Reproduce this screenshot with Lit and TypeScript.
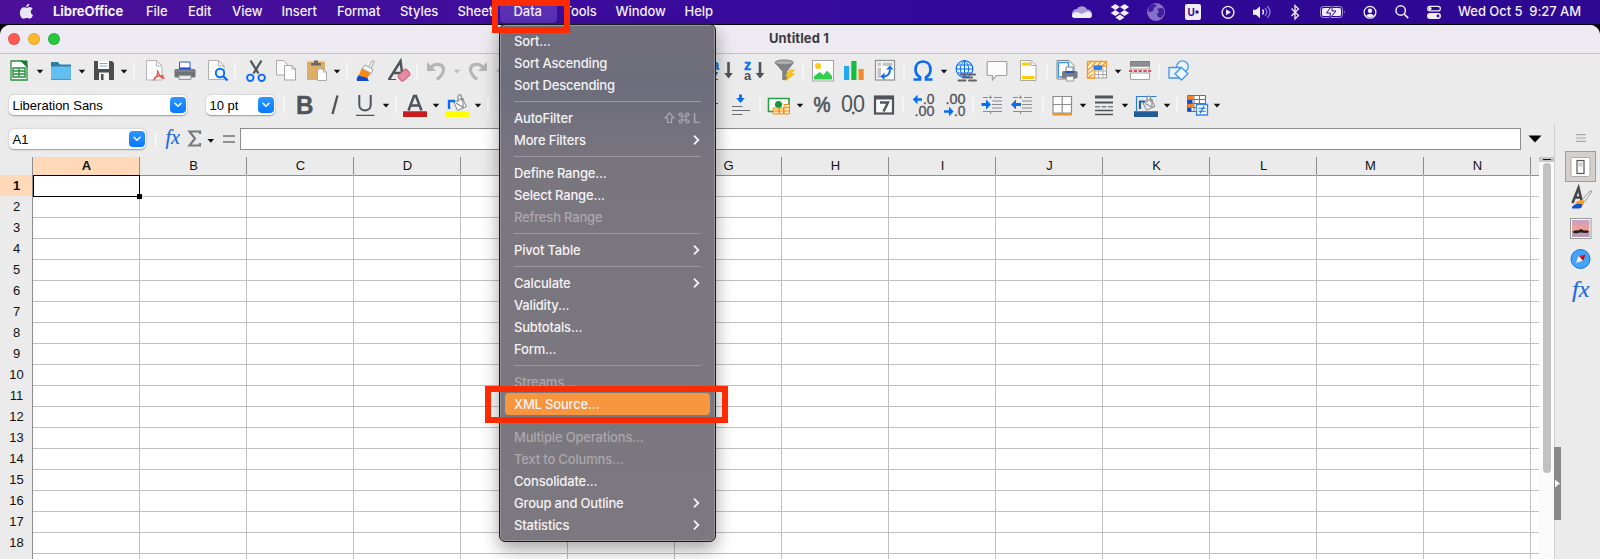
import { LitElement, html, svg, css, SVGTemplateResult } from 'lit';
import { customElement } from 'lit/decorators.js';
import { classMap } from 'lit/directives/class-map.js';

const G = '#50545a';
const B = '#0a6cf0';

// Toolbar glyphs, each drawn on a 24x24 grid.
const icons: Record<string, SVGTemplateResult> = {
  arrow: svg`<path d="M8.7 10.7h6.6L12 14.5z" fill="#111"/>`,
  arrowOff: svg`<path d="M8.7 10.7h6.6L12 14.5z" fill="#bbb"/>`,
  sep: svg`<path d="M12 4v16" stroke="#fafafa" stroke-width="1.4"/>`,
  newSheet: svg`<path d="M4 2h11l5 5v14H4z" fill="#fff" stroke="#2a8f3e" stroke-width="1.3"/><path d="M13 1.5h7.5V9z" fill="#157a2b"/><path d="M6 9h12v9H6zM6 12h12M6 15h12M12 9v9" fill="#fff" stroke="#2a8f3e" stroke-width="1.4"/>`,
  folder: svg`<path d="M2 3h7l2 2.5h11V12H2z" fill="#2e7fa8"/><path d="M2 7.5h20V20a1 1 0 0 1-1 1H3a1 1 0 0 1-1-1z" fill="#62bdf0"/><path d="M2 20.5h20" stroke="#3b9bd4"/>`,
  save: svg`<path d="M2 2h18l2 2v17H2z" fill="#4d4d50"/><path d="M6 2h11v8H6z" fill="#fff"/><path d="M7.500 4.500h8M7.500 7h8" stroke="#76a9dc"/><path d="M7 13.500h10V21H7z" fill="#f4f4f4"/><path d="M9 15h2.500v6H9z" fill="#4d4d50"/>`,
  pdf: svg`<path d="M3.500 1.500h10l5.500 5.500v14H3.500z" fill="#fbfbfb" stroke="#b6b6b6"/><path d="M13.500 1.500V7H19" fill="none" stroke="#b6b6b6"/><path d="M14.500 11c1.500 3-1.500 8-4.500 10.500M14.500 12c1 4 3 6.500 7 7.500M11 19c2-1.500 6-2.500 10-2" fill="none" stroke="#f0514b" stroke-width="1.400"/>`,
  print: svg`<path d="M6.500 3h10.500v8H6.500z" fill="#fff" stroke="#2a5fd0"/><path d="M6 9.500h11.500" stroke="#1546c8" stroke-width="2"/><rect x="1.500" y="10" width="21" height="8.500" rx="1.500" fill="#6f7276"/><path d="M3 12h18" stroke="#8d9094"/><path d="M6 16.500h12v4H6z" fill="#e8e8e8" stroke="#999"/>`,
  preview: svg`<path d="M2.500 1.500h10l5.500 5.500v13.500H2.500z" fill="#fafafa" stroke="#b0b0b0"/><path d="M12.500 1.500V7H18" fill="none" stroke="#b0b0b0"/><circle cx="14" cy="14" r="4.200" fill="#e8f4ff" stroke="${B}" stroke-width="1.900"/><path d="M17 17l4.500 4.500" stroke="${B}" stroke-width="2.300"/>`,
  cut: svg`<path d="M6.500 1.500l8 13M17.500 1.500l-8 13" stroke="#55585c" stroke-width="2.300"/><circle cx="6.300" cy="18.800" r="3.200" fill="none" stroke="${B}" stroke-width="1.900"/><circle cx="17.700" cy="18.800" r="3.200" fill="none" stroke="${B}" stroke-width="1.900"/>`,
  copy: svg`<path d="M2.500 1.500h7l3.500 3.500v11H2.500z" fill="#fafafa" stroke="#aaa"/><path d="M10.500 6.500H18l3.500 3.500v11h-11z" fill="#fff" stroke="#a3a3a3"/><path d="M18 6.500V10h3.500" fill="none" stroke="#a3a3a3"/>`,
  paste: svg`<rect x="2" y="2.500" width="18" height="18.500" rx="1" fill="#dcae67"/><path d="M6 6.500V4h3V1.500h4V4h3v2.500z" fill="#68696b"/><path d="M12.500 10h6l3 3v8.500h-9z" fill="#fff" stroke="#a9a9a9"/><path d="M18.500 10v3h3" fill="none" stroke="#a9a9a9"/>`,
  brush: svg`<path d="M15.500 8.500l4-7 1.800 1-3.300 7" fill="#fff" stroke="#a0a0a0"/><path d="M12 6l8 4.500-1.700 4-9-5z" fill="#f4f4f4" stroke="#a5a5a5"/><path d="M8.500 9.500l9 5c-1 2-2.500 3-3.500 5.500L5 17c1.800-2.500 2.500-5 3.500-7.500z" fill="#f78a0c"/><path d="M5.500 16.500l9 2.500c.5 1.500 1 2.200 1.500 3H4c-.8-1.500 0-4 1.500-5.500z" fill="#1549c8"/>`,
  clear: svg`<path d="M2 20.500L13.500 2l1.700 12.500M6.500 14H14" fill="none" stroke="${G}" stroke-width="2.500"/><path d="M1 20.500h8" stroke="${G}"/><rect x="11.500" y="12.500" width="11.500" height="7.500" rx="1.800" fill="#e98ca3" stroke="#c75c78" transform="rotate(-42 17 16.500)"/>`,
  undo: svg`<path d="M6 9.500c4-6 13.500-5.500 13.500 1.500 0 4-3.500 7-6.500 9.500" fill="none" stroke="#b5b5b5" stroke-width="3.200"/><path d="M3 3v9h9z" fill="#b5b5b5"/>`,
  redo: svg`<path d="M18 9.500C14 3.500 4.500 4 4.500 11c0 4 3.500 7 6.500 9.500" fill="none" stroke="#b5b5b5" stroke-width="3.200"/><path d="M21 3v9h-9z" fill="#b5b5b5"/>`,
  sortAsc: svg`<text x="1.500" y="10.500" font-size="14" font-weight="700" fill="${B}">a</text><text x="1.500" y="21" font-size="14" fill="${G}">z</text><path d="M18.500 3v13" stroke="${G}" stroke-width="2.600"/><path d="M14.200 14h8.600l-4.300 5.500z" fill="${G}"/>`,
  sortDesc: svg`<text x="2" y="10.500" font-size="14.500" font-weight="700" fill="${B}" stroke="${B}" stroke-width=".3">z</text><text x="2" y="21" font-size="13" font-weight="700" fill="${G}">a</text><path d="M18 3v13" stroke="${G}" stroke-width="2.600"/><path d="M13.700 14h8.600L18 19.500z" fill="${G}"/>`,
  filter: svg`<path d="M2 4l7.200 8.500V21h5v-8.500L20.500 4z" fill="#808285"/><ellipse cx="11.200" cy="3.500" rx="9.200" ry="2.500" fill="#a8aaac" stroke="#77797c"/><path d="M17 11l-5 6h3.500L12 22l9.500-7h-4l4-4z" fill="#ffc31c" stroke="#e9a500" stroke-width=".6"/>`,
  image: svg`<rect x="1.500" y="1.500" width="21" height="20.500" fill="#fff" stroke="#a3a3a3"/><circle cx="7" cy="7" r="3" fill="#ffcb12"/><path d="M3 20.500v-3L8.500 13l4 3 3.500-4.500 5 5.500v3.500z" fill="#2fce4b"/>`,
  chart: svg`<path d="M2 7h5.200v14H2z" fill="#23a7ee"/><path d="M9.300 2h5.200v19H9.300z" fill="#14bd3d"/><path d="M16.500 10h5.200v11h-5.200z" fill="#f58a2b"/>`,
  pivot: svg`<rect x="2.500" y="1.500" width="19" height="19.500" fill="#fff" stroke="#909294" stroke-width="1.300"/><path d="M4.500 3.500H8V7H4.500zM9.500 3.500h10V7h-10zM4.500 8.500H8v10.500H4.500z" fill="#c3c5c8"/><path d="M10 17.500c4 0 7-2.500 7-7" fill="none" stroke="${B}" stroke-width="2"/><path d="M13 10.500h7.500L17 6.500zM11.500 13.500v7.500L7.500 17.500z" fill="${B}"/>`,
  omega: svg`<path d="M2.500 20.500H9v-2.300C6 16.500 4.500 14 4.500 10.500c0-5 3-8 7.500-8s7.500 3 7.500 8c0 3.500-1.500 6-4.500 7.700v2.300h6.500" fill="none" stroke="${B}" stroke-width="2.700"/>`,
  globe: svg`<circle cx="10.500" cy="10" r="8.300" fill="#e9f4ff" stroke="${B}" stroke-width="1.200"/><path d="M2.300 10h16.500M3.500 6h14M3.500 14h14M10.500 1.700v16.500M10.500 1.700c-5.500 4-5.500 12.500 0 16.500M10.500 1.700c5.500 4 5.500 12.500 0 16.500" fill="none" stroke="${B}"/><path d="M7 15.500h6M15 15.500h6M9 18.500h9M4.500 21.500h7M15 21.500h7" stroke="#606468" stroke-width="2" stroke-linecap="round"/>`,
  comment: svg`<path d="M3 2.500h18a.8.800 0 0 1 .8.800v12.400a.8.800 0 0 1-.8.800H11.500L7.500 21v-4.500H3a.8.800 0 0 1-.8-.8V3.300A.8.800 0 0 1 3 2.500z" fill="#fcfcfc" stroke="#a0a0a0" stroke-width="1.200"/>`,
  headFoot: svg`<path d="M4.500 1.500h10.500l5 5V21.500H4.500z" fill="#fff" stroke="#a8a8a8"/><path d="M15 1.500V6.500h5" fill="none" stroke="#a8a8a8"/><path d="M6 3.500h8v3H6zM6 17h12.500v3H6z" fill="#ffca10"/>`,
  printArea: svg`<path d="M2 1.500h12l5 5V20H2z" fill="#fff" stroke="#7f8285"/><path d="M3.500 3.500h10v14.500h-10z" fill="#fff" stroke="#3994ee" stroke-width="1.300"/><path d="M11 8h7v6h-7z" fill="#f5f5f5" stroke="#888"/><rect x="7" y="12" width="15.500" height="7.500" rx="1.500" fill="#777a7e"/><path d="M10.500 13h8.500" stroke="#1b55c8" stroke-width="2"/><path d="M11.500 17.500h7V22h-7z" fill="#fff" stroke="#999"/>`,
  freeze: svg`<path d="M2.500 2.500h19V19h-19z" fill="#fff" stroke="#999"/><path d="M2.500 2.500h19V7h-12v12h-7z" fill="#fff3df" stroke="#f79a22" stroke-width="1.400"/><path d="M3 6l3-3M7 7l4-4M12 7l4-4M17 7l4-4M3 11l5-4M3 15l5-4M3 19l5-4" stroke="#f79a22" stroke-width="1.200"/><path d="M9 12h12M9 15.500h12M13.500 7v12M18 7v12" stroke="#aaa"/><path d="M8.500 6.500h8.500v4.500H8.500z" fill="#2683ef"/>`,
  split: svg`<path d="M2.500 2.500h19v4.800h-19z" fill="#8d8f92" stroke="#808080"/><path d="M2.500 7.500h19V10h-19zM2.500 14h19v6.500h-19z" fill="#fff" stroke="#a5a5a5"/><path d="M1 12h22" stroke="#e0142e" stroke-width="1.600" stroke-dasharray="3.200 1.600"/>`,
  shapes: svg`<circle cx="15.500" cy="7.500" r="5.700" fill="#eef6fd" stroke="#4297f0" stroke-width="1.300"/><path d="M2 8.500h11v10.500H2z" fill="#e6f2fd" stroke="#4297f0" stroke-width="1.300"/><path d="M14.500 8.500l6.500 6.200-6.500 6.300L8 14.700z" fill="#f0f7fe" stroke="#4297f0" stroke-width="1.300"/>`,
  bold: svg`<text x="3" y="21" font-size="26" font-weight="700" textLength="17.500" lengthAdjust="spacingAndGlyphs" fill="${G}" stroke="${G}" stroke-width=".4">B</text>`,
  italic: svg`<path d="M14.500 2.500L9.500 21" stroke="${G}" stroke-width="2.400"/>`,
  underline: svg`<path d="M6.300 2v10c0 7.200 11.400 7.200 11.400 0V2" fill="none" stroke="${G}" stroke-width="2"/><path d="M3 22.300h18.500" stroke="${G}" stroke-width="1.200"/>`,
  fontColor: svg`<path d="M5.500 17.500L11 3h2l5.500 14.500M7.500 12.500h9" fill="none" stroke="${G}" stroke-width="2.500"/><path d="M0 18.300h24V24H0z" fill="#c91c1c"/>`,
  highlight: svg`<path d="M9 9.500l8-4.500 4.500 8.500-9 4z" fill="#f5f6f7" stroke="#85888c"/><path d="M13 9V3.500c0-2.500 3.500-2.500 3.500 0V8M18 5v9M11 10l8 5" fill="none" stroke="#8d9094" stroke-width="1.200"/><path d="M4 16V8h6" fill="none" stroke="${B}" stroke-width="2.400"/><path d="M0 18.300h24V24H0z" fill="#ff0"/>`,
  vcenter: svg`<path d="M2 10.500h19" stroke="${G}" stroke-width="1.200"/>`,
  vbottom: svg`<path d="M11.500 1.500v4" stroke="${B}" stroke-width="2.800"/><path d="M7.200 5h8.600L11.500 10z" fill="${B}"/><path d="M3 13.500h10.500M3 17.500h18M3 21.500h10.500" stroke="#696c70" stroke-width="1.200"/>`,
  currency: svg`<path d="M1.500 5.500h20.500v13H1.500z" fill="#fff" stroke="#27a143" stroke-width="1.600"/><circle cx="11.500" cy="11.500" r="3.500" fill="#179537"/><path d="M6 15h6v6H6zM12.500 15h4v6h-4zM17 11.500h5.500V21H17z" fill="#ffe7b7" stroke="#f08d18"/><path d="M6 18h6M12 18h4.500M17 14.500h5.500M17 18h5.500" stroke="#f08d18"/>`,
  percent: svg`<text x="3.500" y="19" font-size="22" textLength="17" lengthAdjust="spacingAndGlyphs" fill="${G}" stroke="${G}" stroke-width=".7">%</text>`,
  number: svg`<text x="0" y="19" font-size="23" textLength="24" lengthAdjust="spacingAndGlyphs" fill="${G}">00</text><path d="M11.200 18.800h2.200V21.200h-2.200z" fill="${G}"/>`,
  date: svg`<rect x="3" y="3.500" width="18" height="17" fill="#fafafa" stroke="${G}" stroke-width="2.200"/><path d="M3 5h18" stroke="${G}" stroke-width="3"/><path d="M8 9.500h8L11.500 18.500" fill="none" stroke="${G}" stroke-width="2.400"/>`,
  decAdd: svg`<path d="M4 6.500h6" stroke="${B}" stroke-width="2.700"/><path d="M5.500 1.800v9.400L.8 6.500z" fill="${B}"/><text x="11" y="11" font-size="14.500" textLength="11.500" lengthAdjust="spacingAndGlyphs" fill="${G}" stroke="${G}" stroke-width=".3">.0</text><text x="2.500" y="23" font-size="14.500" textLength="20" lengthAdjust="spacingAndGlyphs" fill="${G}" stroke="${G}" stroke-width=".3">.00</text>`,
  decDel: svg`<text x="2.500" y="11" font-size="14.500" textLength="20" lengthAdjust="spacingAndGlyphs" fill="${G}" stroke="${G}" stroke-width=".3">.00</text><path d="M1 18.500h6" stroke="${B}" stroke-width="2.700"/><path d="M6 13.800v9.400l4.700-4.700z" fill="${B}"/><text x="11" y="23" font-size="14.500" textLength="11.500" lengthAdjust="spacingAndGlyphs" fill="${G}" stroke="${G}" stroke-width=".3">.0</text>`,
  indent: svg`<path d="M9 4.500h3M14 4.500h8M12 8h10M12 11.500h10M12 15h10M3 18.500h19M3 4.500h5M10.500 2.500v3M10.500 18v3" stroke="#898c90" stroke-width="1.200"/><path d="M1.500 11.500h6" stroke="${B}" stroke-width="2.800"/><path d="M6 6.500v10l5-5z" fill="${B}"/>`,
  outdent: svg`<path d="M9 4.500h3M14 4.500h8M12 8h10M12 11.500h10M12 15h10M3 18.500h19M3 4.500h5M10.500 2.500v3M10.500 18v3" stroke="#898c90" stroke-width="1.200"/><path d="M5 11.500h6" stroke="${B}" stroke-width="2.800"/><path d="M6 6.500v10l-5-5z" fill="${B}"/>`,
  borders: svg`<path d="M3 3.500h18.500V20H3zM12.200 3.500v16M3 11.500h18.500" fill="#fff" stroke="#8b8d90" stroke-width="1.200"/><path d="M2.500 21.300h19.500" stroke="#f7931e" stroke-width="2.400"/>`,
  lineStyle: svg`<path d="M3 4h18" stroke="${G}" stroke-width="3"/><path d="M3 9.500h18" stroke="${G}" stroke-width="2"/><path d="M3 13.800h18" stroke="${G}" stroke-dasharray="5 1.500"/><path d="M3 17.500h18M3 21.500h18" stroke="${G}" stroke-width="1.600"/>`,
  lineColor: svg`<path d="M2.500 18V3.500h20" fill="none" stroke="#2f7fd0" stroke-width="1.200"/><path d="M9 10l8-4.500 4 8-8.500 3.500z" fill="#eee" stroke="#85888c"/><path d="M13 9.500V5c0-2.500 3.500-2.500 3.500 0v4M18 6v8M11 10.500l8 4" fill="none" stroke="#8d9094" stroke-width="1.200"/><path d="M6 16V8.500h5" fill="none" stroke="#2a6099" stroke-width="2.200"/><path d="M0 18.300h24V24H0z" fill="#235c99"/>`,
  conditional: svg`<path d="M2.500 2.500h18v16h-18zM9 2.500v16M14.500 2.500v16M2.500 6.500h18M2.500 10.500h18M2.500 14.500h18" fill="#fff" stroke="#6e7073"/><path d="M2.500 3H8.500v3.500h-6zM2.500 11H8.500v3.500h-6z" fill="#f58220"/><path d="M2.500 7H7.500v3.500h-5zM2.500 15H6.500v3.500h-4z" fill="#1648c8"/><path d="M11.500 11.500h11V22h-11z" fill="#fff" stroke="#3585ea" stroke-width="1.300"/><path d="M13.500 15.200h7M13.500 18.200h7M19 13l-4 7.500" stroke="${B}" stroke-width="1.100"/>`,
};

type Tool = [name: string, centre: number];
const row1: Tool[] = [
  ['newSheet', 19], ['arrow', 40], ['folder', 61], ['arrow', 82], ['save', 104], ['arrow', 124], ['sep', 134],
  ['pdf', 154.5], ['print', 185], ['preview', 217.5], ['sep', 234.5], ['cut', 255.5], ['copy', 286], ['paste', 317], ['arrow', 337], ['sep', 346.5],
  ['brush', 365], ['clear', 399], ['sep', 416.5], ['undo', 436], ['arrowOff', 457], ['redo', 478], ['arrowOff', 498.5],
  ['sortAsc', 722], ['sortDesc', 753.5], ['filter', 785], ['sep', 802.5], ['image', 823], ['chart', 854], ['pivot', 885], ['sep', 903.5],
  ['omega', 923], ['arrow', 944], ['globe', 965.5], ['comment', 997], ['headFoot', 1028], ['sep', 1046.5],
  ['printArea', 1067], ['freeze', 1097], ['arrow', 1118], ['split', 1140], ['sep', 1158.5], ['shapes', 1179],
];
const row2: Tool[] = [
  ['sep', 283.5], ['bold', 304.5], ['italic', 334.5], ['underline', 365], ['arrow', 385.500], ['sep', 395.5], ['fontColor', 415], ['arrow', 435.500],
  ['highlight', 457], ['arrow', 477.5], ['sep', 487.5], ['vcenter', 709], ['vbottom', 741], ['sep', 759.5], ['currency', 779], ['arrow', 799.5],
  ['percent', 822], ['number', 853], ['date', 884], ['sep', 902.5], ['decAdd', 924], ['decDel', 955], ['sep', 972.5],
  ['indent', 991.5], ['outdent', 1022], ['sep', 1042.5], ['borders', 1061.5], ['arrow', 1082.5], ['lineStyle', 1104], ['arrow', 1124.5],
  ['lineColor', 1146], ['arrow', 1166.5], ['sep', 1176.5], ['conditional', 1196.5], ['arrow', 1216.5],
];

const STATUS: [SVGTemplateResult, number][] = [
  [svg`<path d="M2 14c0-3 2.500-5 5-5 1.500-3.500 8-4 10 .5 3 0 5 2 5 4.500z" fill="#a99bd6"/><path d="M4.500 18C1 18 1 13 5 12.500c2-1.500 4 0 6.500 1.500l6-2.500c2 0 4.500 1.500 4.500 3.700 0 2-1.500 2.800-3 2.800z" fill="#f0eef8"/>`, 1082],
  [svg`<path d="M7.300 4l4.600 3-4.600 3-4.600-3zM16.500 4l4.600 3-4.600 3-4.600-3zM7.300 10l4.600 3-4.600 3-4.600-3zM16.500 10l4.600 3-4.600 3-4.600-3zM11.900 14.500l4.600 3-4.600 3-4.600-3z" fill="#f0eef8"/>`, 1120],
  [svg`<circle cx="12" cy="12" r="9" fill="#8470c6"/><path d="M5 6l4-2 4 1-3 3-1 3-3 1-2-1zM13 9l4-1 3 1v5l-3 4-3-1-1-3 2-2z" fill="#370d9a" opacity=".85"/>`, 1156],
  [svg`<rect x="4" y="4" width="16" height="16" rx="2" fill="#f0eef8"/><text x="6.500" y="15.700" font-size="10" font-weight="700" fill="#330b96">U</text><circle cx="16" cy="12" r="1.700" fill="#330b96"/>`, 1193],
  [svg`<circle cx="12" cy="12.300" r="5.900" fill="none" stroke="#f0eef8" stroke-width="1.400"/><path d="M10 9.300v6l5-3z" fill="#f0eef8"/>`, 1227.5],
  [svg`<path d="M3 9.700h3l4-3.500v12l-4-3.500H3z" fill="#f0eef8"/><path d="M12.500 9.500q2 2.500 0 5" fill="none" stroke="#f0eef8" stroke-width="1.300"/><path d="M15 7.800q3.500 4.200 0 8.400M17.500 6q5 6 0 12" fill="none" stroke="#8d7bcb" stroke-width="1.300"/>`, 1262],
  [svg`<path d="M8.500 8.500l7 7L12 19V5.500L15.500 9l-7 7" fill="none" stroke="#f0eef8" stroke-width="1.300"/>`, 1295],
  [svg`<rect x="-.5" y="6.500" width="22" height="11" rx="3" fill="none" stroke="#a79bd8"/><rect x="1" y="8" width="19" height="8" rx="1.500" fill="#f0eef8"/><path d="M11 5.500L5.500 13h4l-1 5.500L15 11h-4z" fill="#f0eef8" stroke="#300a96" stroke-width="1"/><path d="M23 10.500q1.800 1.500 0 3z" fill="#a79bd8"/>`, 1333],
  [svg`<circle cx="12" cy="12.300" r="5.900" fill="none" stroke="#f0eef8" stroke-width="1.300"/><circle cx="12" cy="10.800" r="2.200" fill="#f0eef8"/><path d="M8 15.800q4-4 8 0-4 3-8 0z" fill="#f0eef8"/>`, 1369.5],
  [svg`<circle cx="10.700" cy="10.500" r="4.700" fill="none" stroke="#f0eef8" stroke-width="1.500"/><path d="M14 14l4.200 4.200" stroke="#f0eef8" stroke-width="1.700"/>`, 1401.5],
  [svg`<rect x="5.600" y="6.300" width="12.800" height="4.600" rx="2.300" fill="none" stroke="#f0eef8" stroke-width="1.200"/><circle cx="8" cy="8.600" r="1.600" fill="#f0eef8"/><rect x="5" y="13" width="14" height="6" rx="3" fill="#f0eef8"/><circle cx="16" cy="16" r="1.400" fill="#330b96"/>`, 1434],
];

const MENUS: [string, number][] = [
  ['File', 42], ['Edit', 44], ['View', 49.5], ['Insert', 55.5], ['Format', 63], ['Styles', 57.5], ['Sheet', 56],
  ['Data', 50], ['Tools', 52], ['Window', 69], ['Help', 40],
];

interface Entry { label?: string; off?: boolean; sub?: boolean; keys?: boolean; active?: boolean }
const ENTRIES: Entry[] = [
  { label: 'Sort...' }, { label: 'Sort Ascending' }, { label: 'Sort Descending' }, {},
  { label: 'AutoFilter', keys: true }, { label: 'More Filters', sub: true }, {},
  { label: 'Define Range...' }, { label: 'Select Range...' }, { label: 'Refresh Range', off: true }, {},
  { label: 'Pivot Table', sub: true }, {},
  { label: 'Calculate', sub: true }, { label: 'Validity...' }, { label: 'Subtotals...' }, { label: 'Form...' }, {},
  { label: 'Streams...', off: true }, { label: 'XML Source...', active: true }, {},
  { label: 'Multiple Operations...', off: true }, { label: 'Text to Columns...', off: true }, { label: 'Consolidate...' },
  { label: 'Group and Outline', sub: true }, { label: 'Statistics', sub: true },
];

const glyph = (art: SVGTemplateResult, left: number) =>
  html`<svg class="glyph" style="margin-left:${left}px" viewBox="0 0 24 24">${art}</svg>`;

// Lays glyphs out in one line by their centres, starting from the given offset.
function strip(tools: [SVGTemplateResult, number][], start: number) {
  let end = start;
  return tools.map(([art, c]) => {
    const left = c - 12 - end;
    end = c + 12;
    return glyph(art, left);
  });
}
const tools = (list: Tool[], start: number) => strip(list.map(([n, c]) => [icons[n], c] as [SVGTemplateResult, number]), start);

const chevron = html`<span class="drop"><svg width="8" height="6" viewBox="0 0 8 6"><path d="M1 1.200L4 4.300l3-3.100" fill="none" stroke="#fff" stroke-width="1.500" stroke-linecap="round" stroke-linejoin="round"/></svg></span>`;

@customElement('data-menu')
export class DataMenu extends LitElement {
  static styles = css`
    :host { display: block; box-sizing: border-box; width: 217px; padding: 5px; border: 1px solid #1c1c20; border-radius: 6px;
      box-shadow: inset 0 0 0 1px #96939a, 0 7px 18px rgba(0,0,0,.36); background: linear-gradient(#716f7a, #6d6d7b 60px, #7a767e 150px, #7c787f);
      color: #f4f3f5; font: 500 13px/22px Inter, sans-serif; }
    .item { display: flex; align-items: center; justify-content: space-between; height: 22px; padding: 0 9px; border-radius: 4px; white-space: nowrap; letter-spacing: -.18px; }
    .off { color: #aaa7ad; }
    .active { background: #f7963f; }
    .line { height: 1px; margin: 5px 9px; background: #9a979e; }
    .keys { color: #a9a7af; display: flex; align-items: center; gap: 3px; margin-right: 1px; }
    .sub { margin-right: 1px; }
  `;
  render() {
    return ENTRIES.map(e => e.label ? html`
      <div class=${classMap({ item: true, off: !!e.off, active: !!e.active })}>
        <span>${e.label}</span>
        ${e.sub ? html`<svg class="sub" width="7" height="12" viewBox="0 0 7 12"><path d="M1 1.700L5.300 6 1 10.300" fill="none" stroke="#f4f3f5" stroke-width="1.800"/></svg>` : ''}
        ${e.keys ? html`<span class="keys"><svg width="11" height="12" viewBox="0 0 11 12"><path d="M5.500 1L1 6h2.500v4.500h4V6H10z" fill="none" stroke="#a9a7af" stroke-width="1.200"/></svg><svg width="12" height="12" viewBox="0 0 12 12"><path d="M4 4V2.700A1.500 1.500 0 1 0 2.700 4h6.600A1.500 1.500 0 1 0 8 2.700v6.600A1.500 1.500 0 1 0 9.300 8H2.700A1.500 1.500 0 1 0 4 9.300z" fill="none" stroke="#a9a7af" stroke-width="1.200"/></svg><span>L</span></span>` : ''}
      </div>` : html`<div class="line"></div>`);
  }
}

@customElement('app-root')
export class AppRoot extends LitElement {
  static styles = css`
    :host { display: flex; flex-direction: column; position: relative; width: 1600px; height: 559px; overflow: hidden; background: #000; font-family: "Liberation Sans", sans-serif; }
    .menubar { display: flex; align-items: center; height: 24px; flex: none; background: linear-gradient(90deg, #4c1199, #3d0c9c 35%, #32089b 60%, #2d0890); color: #f3f0fa; font: 500 13px/22px Inter, sans-serif; white-space: pre; }
    .apple { margin-left: 19px; margin-top: -1px; }
    .brand { font-weight: 700; margin-left: 19px; width: 93px; }
    .brand, .menu-title { flex: none; height: 24px; letter-spacing: -.05px; }
    .status { display: flex; flex: 1; align-items: center; height: 24px; }
    .clock { margin-left: 12px; height: 24px; flex: none; letter-spacing: -.05px; }
    .glyph { width: 24px; height: 24px; flex: none; overflow: visible; }
    .menu-title { position: relative; }
    .lit::before { content: ""; position: absolute; left: -14px; top: 3px; width: 57px; height: 20px; border-radius: 4px; background: #5a30b5; z-index: 0; }
    .lit span { position: relative; }
    .window { display: flex; flex-direction: column; flex: 1; margin-top: 1px; border-radius: 10px 10px 0 0; background: #ebebeb; overflow: hidden; min-height: 0; }
    .titlebar { display: flex; align-items: center; height: 28px; flex: none; background: #edeaf1; border-bottom: 1px solid #c6c4c8; }
    .lights { display: flex; gap: 8px; margin-left: 8px; width: 761px; }
    .light { width: 12px; height: 12px; border-radius: 50%; box-sizing: border-box; border: 1px solid rgba(0,0,0,.1); }
    .red { background: #fe5a52; } .amber { background: #fdb92c; } .green { background: #26c63f; }
    .title { font: 700 13px/24px Inter, sans-serif; color: #3b393e; margin-top: -2px; letter-spacing: .1px; }
    .bar { display: flex; align-items: center; height: 34px; flex: none; }
    .combo { display: flex; align-items: center; justify-content: space-between; box-sizing: border-box; height: 20px; padding: 0 1.500px 0 3.500px; border-radius: 5px; background: #fff; box-shadow: 0 .5px 1.500px rgba(0,0,0,.35); font-size: 13px; color: #000; white-space: nowrap; }
    .font { margin-left: 9px; width: 178px; } .size { margin-left: 19px; width: 69px; } .cell { margin-left: 9px; width: 137px; height: 20px; }
    .drop { display: flex; align-items: center; justify-content: center; width: 16px; height: 16px; border-radius: 4px; background: linear-gradient(#2e95ff, #067aff); }
    .lower { display: flex; flex: 1; min-height: 0; margin-top: 2px; }
    .main { width: 1554px; display: flex; flex-direction: column; flex: none; }
    .formula { display: flex; height: 33px; flex: none; align-items: flex-start; padding-top: 4px; box-sizing: border-box; }
    .cell { margin-top: 1px; }
    .input { box-sizing: border-box; width: 1281px; height: 22px; border: 1px solid #8c8c8c; background: #fff; margin-left: 2px; }
    .tri { margin: 7px 0 0 7px; }
    .sheetwrap { display: flex; flex: 1; min-height: 0; }
    .sheet { width: 1539px; flex: none; background: #fff; overflow: hidden; }
    .row { display: grid; grid-template-columns: 33px repeat(14, 107px) 1fr; height: 21px; font-size: 13px; line-height: 21px; color: #111; }
    .row > div { box-sizing: border-box; border-right: 1px solid #c0c0c0; border-bottom: 1px solid #c0c0c0; }
    .row > div:last-child { border-right: 0; }
    .row > .num { background: #ebebeb; border-color: #8d8d8d; text-align: center; padding-left: 1px; }
    .row.head { height: 18px; line-height: 18px; text-align: center; }
    .head > div.hcell { background: #ebebeb; border-color: #8d8d8d; padding-left: 1px; }
    .row > div.on { background: #ffd9b8; font-weight: 700; }
    .cursor { position: relative; }
    .cursor::before { content: ""; position: absolute; inset: 0 -1px -.5px 0; border: 1.500px solid #000; }
    .cursor::after { content: ""; position: absolute; right: -3px; bottom: -3px; width: 5px; height: 5px; background: #000; }
    .scroll { width: 15px; background: #fafafa; display: flex; flex-direction: column; align-items: center; }
    .split { align-self: stretch; height: 5px; background: #c6c6c6; display: flex; align-items: center; justify-content: center; flex: none; }
    .dash { width: 8px; height: 1.300px; background: #111; }
    .thumb { width: 8px; height: 310px; border-radius: 4px; background: #c1c1c1; margin-top: 1px; }
    .side { position: relative; box-sizing: border-box; width: 46px; border-left: 1px solid #cfcfcf; display: flex; flex-direction: column; align-items: center; padding: 10px 0 0 6px; }
    .deck { box-sizing: border-box; display: flex; align-items: center; justify-content: center; width: 31px; height: 31px; margin-top: 9px; border: 1px solid #a19d9b; background: #d5d0ce; }
    .side svg { flex: none; }
    .sideico { margin-top: 6.500px; overflow: visible; }
    .deck + .sideico { margin-top: 4px; }
    .fx { font: italic 20px "Liberation Serif", serif; fill: #1a6ae0; stroke: #1a6ae0; stroke-width: .2px; }
    .big { font-size: 24px; }
    .handle { position: absolute; left: -1px; top: 323px; width: 7px; height: 73px; background: #888; display: flex; align-items: center; }
    .popup { position: absolute; left: 499px; top: 24px; }
    .mark { position: absolute; box-sizing: border-box; border: 6px solid #fe2a00; }
    .m1 { left: 492px; top: 0; width: 78px; height: 33px; }
    .m2 { left: 485px; top: 386px; width: 243px; height: 37px; }
  `;

  render() {
    const cols = 'ABCDEFGHIJKLMN'.split('');
    return html`
      <div class="menubar">
        <svg class="apple" width="15" height="17" viewBox="0 0 15 17"><path d="M10.300.7c.1 1.800-1.500 3.400-3.100 3.300C7 2.400 8.600.8 10.300.7zM7.500 4.900c.8 0 1.700-.9 3.200-.8 1.300.1 2.300.6 2.900 1.600-2.700 1.700-2.200 5.200.4 6.300-.6 1.500-1.700 3.700-3.200 3.700-1.100 0-1.600-.7-3-.7s-1.900.7-3 .7C2.300 15.700.7 12 .9 9.200c.2-3 2-5 4.300-5 1 0 1.700.7 2.300.7z" fill="#eae5f4"/></svg>
        <span class="brand">LibreOffice</span>
        ${MENUS.map(([m, w]) => html`<span class=${classMap({ 'menu-title': true, lit: m === 'Data' })} style="width:${w}px"><span>${m}</span></span>`)}
        <div class="status">${strip(STATUS, 724.5)}<span class="clock">Wed Oct 5  9:27 AM</span></div>
      </div>
      <div class="window">
        <div class="titlebar">
          <div class="lights"><i class="light red"></i><i class="light amber"></i><i class="light green"></i></div>
          <div class="title">Untitled 1</div>
        </div>
        <div class="bar">${tools(row1, 0)}</div>
        <div class="bar">
          <div class="combo font">Liberation Sans${chevron}</div>
          <div class="combo size">10 pt${chevron}</div>
          ${tools(row2, 275)}
        </div>
        <div class="lower">
          <div class="main">
            <div class="formula">
              <div class="combo cell">A1${chevron}</div>
              <svg width="92" height="24" viewBox="146 0 92 24">
                <path d="M155.500 5v13" stroke="#fafafa" stroke-width="1.400"/>
                <text class="fx" x="165.500" y="16">fx</text>
                <path d="M200 6V3.500h-10.500l5.500 7-5.500 7H200v-2.500" fill="none" stroke="#777a7d" stroke-width="2.200"/>
                <path d="M207.500 11h6.600l-3.300 3.800z" fill="#111"/>
                <path d="M223 8h12M223 14h12" stroke="#909090" stroke-width="2"/>
              </svg>
              <div class="input"></div>
              <svg class="tri" width="14" height="8" viewBox="0 0 14 8"><path d="M.5.500h13L7 7.500z" fill="#000"/></svg>
            </div>
            <div class="sheetwrap">
              <div class="sheet">
                <div class="row head">
                  <div class="hcell"></div>
                  ${cols.map((c, i) => html`<div class=${classMap({ hcell: true, on: i === 0 })}>${c}</div>`)}
                  <div class="hcell"></div>
                </div>
                ${Array.from({ length: 19 }, (_, r) => html`
                  <div class="row">
                    <div class=${classMap({ num: true, on: r === 0 })}>${r + 1}</div>
                    ${cols.map((_c, i) => html`<div class=${classMap({ cursor: r === 0 && i === 0 })}></div>`)}
                    <div></div>
                  </div>`)}
              </div>
              <div class="scroll"><div class="split"><div class="dash"></div></div><div class="thumb"></div></div>
            </div>
          </div>
          <div class="side">
            <svg width="12" height="8" viewBox="0 0 12 8"><path d="M1 .7h10M1 4h10M1 7.300h10" stroke="#aaa" stroke-width="1.200"/></svg>
            <div class="deck"><svg width="21" height="22" viewBox="0 0 21 22"><rect x="1" y="1.500" width="19" height="19" rx="1.500" fill="#fff" stroke="#aaa"/><rect x="7" y="4.500" width="7" height="13" fill="#fafafa" stroke="#555" stroke-width="1.200"/><path d="M8.500 6.500h4v4h-4z" fill="#ccc"/></svg></div>
            <svg class="sideico" width="24" height="24" viewBox="0 0 24 24"><path d="M3.500 17L9.500 2l3 12M5 11.500h7" fill="none" stroke="#43474c" stroke-width="2.600"/><path d="M13 14L21 5q2-1 1.500 1l-7 10z" fill="#eee" stroke="#999"/><path d="M6 17.500q4-5 9-3 1 4-2 5z" fill="#f99e1f"/><path d="M3 21q3-4.500 10-3 1 4-3 4.500H3z" fill="#1354cc"/></svg>
            <svg class="sideico" width="24" height="24" viewBox="0 0 24 24"><defs><linearGradient id="sky" x2="0" y2="1"><stop stop-color="#c5a0c8"/><stop offset=".7" stop-color="#ffa184"/></linearGradient></defs><rect x="1.500" y="1.500" width="20.500" height="20" fill="#fff" stroke="#999"/><path d="M3 3h17.500v17H3z" fill="url(#sky)"/><path d="M3 15.500h17.500V20H3z" fill="#b79ab8"/><path d="M3 15q3-2.500 6-1.500l3-1.500 3 1.500q4-1 5.500 1.500l-3 1-6-.5-5 1z" fill="#241d22"/></svg>
            <svg class="sideico" width="24" height="24" viewBox="0 0 24 24"><circle cx="11.500" cy="12" r="9.500" fill="#45a3fa" stroke="#1679df"/><path d="M16.500 7.500l-7 1.500 4.500 4.500z" fill="#e6232a"/><path d="M9.500 9l-2.500 7 7-2.500z" fill="#f4f4f4"/><path d="M16.500 7.500L14 13.500l-2.200-2.200z" fill="#b30c18"/></svg>
            <svg class="sideico" width="24" height="24" viewBox="0 0 24 24"><text class="fx big" x="3" y="19">fx</text></svg>
            <div class="handle"><svg width="7" height="9" viewBox="0 0 7 9"><path d="M1 .5v8l5-4z" fill="#f5f5f5"/></svg></div>
          </div>
        </div>
      </div>
      <data-menu class="popup"></data-menu>
      <div class="mark m1"></div>
      <div class="mark m2"></div>
    `;
  }
}
